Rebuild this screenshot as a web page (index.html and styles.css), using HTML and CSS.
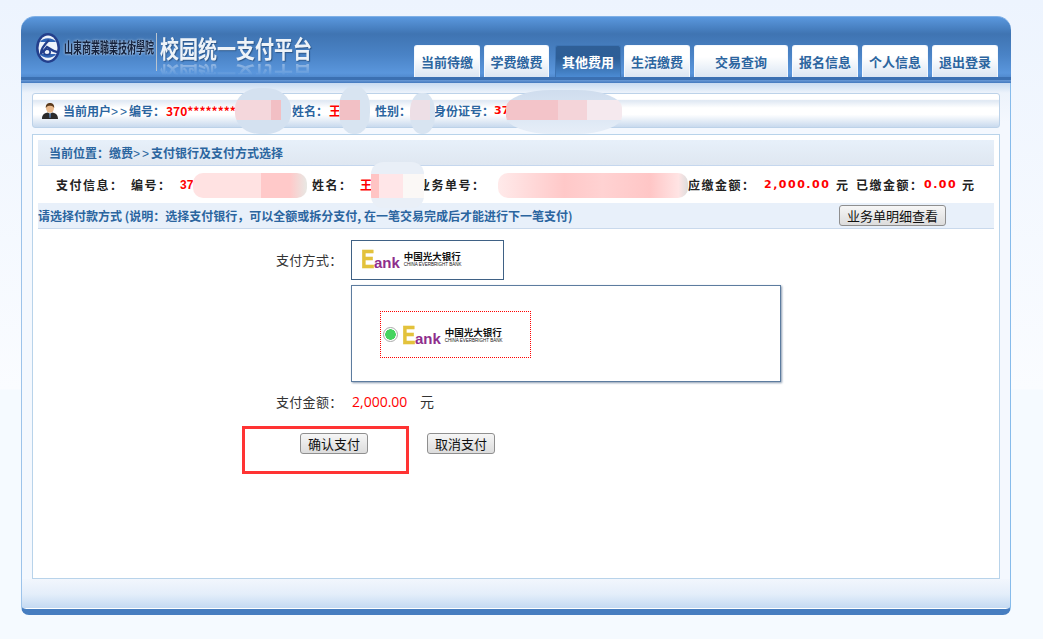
FILE: index.html
```html
<html>

<head>
  <title>校园统一支付平台</title>
  <meta charset="utf-8">
  <link rel="stylesheet" href="styles.css">
</head>

<body>
  <div class="shell">
    <div class="header">
      <div class="brand">
        <svg class="logo" width="24" height="30" viewBox="0 0 24 30">
          <ellipse cx="12" cy="15" rx="12" ry="15" fill="#233f8c" />
          <ellipse cx="12" cy="15" rx="9.500" ry="12.500" fill="#eef3fb" />
          <path d="M4 9 C7 4 17 4 20 9 Z" fill="#2f63b4" />
          <path d="M4 21 C7 26 17 26 20 21 Z" fill="#2f63b4" />
          <path d="M13 7 C9 11 5 16 5 20 C8 19 9 16 11 14 C15 16 17 19 21 19" fill="none" stroke="#233f8c" stroke-width="2.400" />
          <ellipse cx="11" cy="19" rx="3.200" ry="2.800" fill="none" stroke="#233f8c" stroke-width="1.600" />
        </svg>
        <span class="school">山東商業職業技術學院</span>
        <span class="divider"></span>
        <div class="title-wrap">
          <span class="title">校园统一支付平台</span>
          <span class="title-shadow" aria-hidden="true">校园统一支付平台</span>
        </div>
      </div>
      <div class="tabs">
        <a class="tab">当前待缴</a>
        <a class="tab tab-narrow">学费缴费</a>
        <a class="tab active">其他费用</a>
        <a class="tab">生活缴费</a>
        <a class="tab tab-wide">交易查询</a>
        <a class="tab">报名信息</a>
        <a class="tab">个人信息</a>
        <a class="tab">退出登录</a>
      </div>
    </div>
    <div class="strip"></div>

    <div class="main">
      <div class="user-bar">
        <svg class="user-icon" width="16" height="16" viewBox="0 0 16 16">
          <path d="M0 16 C0 11 3 10 6 9.500 L8 11 L10 9.500 C13 10 16 11 16 16 Z" fill="#2b2b2b" />
          <path d="M7 10.500 L9 10.500 L8.500 15 L7.500 15 Z" fill="#5a7fb0" />
          <ellipse cx="8" cy="5" rx="4" ry="4.800" fill="#e9b98c" />
          <path d="M3.800 5 C3.500 1 6 0 8 0 C10 0 12.500 1 12.200 5 C11 3 9 2.800 8 2.800 C7 2.800 5 3 3.800 5 Z" fill="#5a3a1c" />
        </svg>
        <span class="user-text user-label">当前用户<span class="arrows">&gt;&gt;</span>编号：</span>
        <span class="user-text red user-id">370********</span>
        <span class="user-text user-name">姓名：</span>
        <span class="user-text red user-fam">王</span>
        <span class="user-text user-sex">性别：</span>
        <span class="user-text user-card">身份证号：</span>
        <span class="user-text red user-rest">37</span>
      </div>

      <div class="content">
        <div class="crumb">当前位置：缴费<span class="arrows">&gt;&gt;</span>支付银行及支付方式选择</div>
        <div class="pay-info">
          <span class="info-a">支付信息：</span>
          <span class="info-b">编号：</span>
          <span class="red info-c">37</span>
          <span class="info-d">姓名：</span>
          <span class="red info-e">王</span>
          <span class="info-f">业务单号：</span>
          <span class="info-g">应缴金额：</span>
          <span class="red money info-h">2,000.00</span>
          <span class="info-i">元</span>
          <span class="info-j">已缴金额：</span>
          <span class="red money info-k">0.00</span>
          <span class="info-i">元</span>
        </div>
        <div class="method-bar">
          <span>请选择付款方式 (说明：选择支付银行，可以全额或拆分支付, 在一笔交易完成后才能进行下一笔支付)</span>
          <button class="button detail-btn">业务单明细查看</button>
        </div>

        <div class="form">
          <div class="form-label method-label">支付方式：</div>
          <div class="bank-tab">
            <div class="bank-logo">
              <span class="bank-e">E</span><span class="bank-ank">ank</span>
              <div class="bank-name">
                <span class="bank-cn">中国光大银行</span>
                <span class="bank-en">CHINA EVERBRIGHT BANK</span>
              </div>
            </div>
          </div>
          <div></div>
          <div class="bank-panel">
            <div class="bank-choice">
              <span class="radio"></span>
              <div class="bank-logo">
                <span class="bank-e">E</span><span class="bank-ank">ank</span>
                <div class="bank-name">
                  <span class="bank-cn">中国光大银行</span>
                  <span class="bank-en">CHINA EVERBRIGHT BANK</span>
                </div>
              </div>
            </div>
          </div>
          <div class="form-label amount-row">支付金额：</div>
          <div class="amount-row amount">
            <span class="red amount-num">2,000.00</span>
            <span>元</span>
          </div>
        </div>
        <div class="actions">
          <button class="button">确认支付</button>
          <button class="button">取消支付</button>
        </div>
      </div>
    </div>

    <div class="footer"></div>

    <!-- redacted areas and the red mark lie over the page -->
    <div class="blob blob-a"></div>
    <div class="blob blob-b"></div>
    <div class="blob blob-c"></div>
    <div class="blob blob-d"></div>
    <div class="blob blob-e"></div>
    <div class="blob blob-f"></div>
    <div class="blob blob-g"></div>
    <div class="mark"></div>
  </div>
</body>

</html>
```
FILE: styles.css
```css
body {
  margin: 0;
  height: 639px;
  overflow: hidden;
  font-family: "Noto Sans CJK SC", sans-serif;
  font-size: 12px;
  background: linear-gradient(#edf4fe 0, #fafcff 389px, #f5faff 390px);
}

.red {
  color: #f00;
}

.arrows {
  font-family: "Liberation Sans", sans-serif;
  font-weight: normal;
  letter-spacing: 2px;
}

.shell {
  position: relative;
  width: 990px;
  height: 599px;
  margin: 16px 0 0 21px;
  display: flex;
  flex-direction: column;
}

.header {
  height: 61px;
  flex: none;
  display: flex;
  justify-content: space-between;
  border-radius: 14px 14px 0 0;
  border-top: 1px solid #7fb0e6;
  box-sizing: border-box;
  background: linear-gradient(#5a98de 0, #3f74b2 17px, #4a83c6 38px, #5a96dc 56px, #4f88cc 61px);
}

.brand {
  display: flex;
  align-items: flex-start;
  padding: 16px 0 0 15px;
}

.logo {
  margin-right: 4px;
}

.school {
  width: 90px;
  margin-top: 8px;
  font-family: "Liberation Serif", "Noto Sans CJK SC", serif;
  font-size: 9px;
  font-weight: bold;
  line-height: 14px;
  white-space: nowrap;
  color: #14213c;
  text-shadow: 0 0 2px #dfe8f4;
  transform: scaleY(1.600);
}

.divider {
  width: 1px;
  height: 38px;
  margin: 0 3px 0 2px;
  background: #b9c4cf;
}

.title-wrap {
  position: relative;
}

.title {
  display: block;
  margin-top: 1px;
  font-size: 19px;
  font-weight: bold;
  line-height: 27px;
  white-space: nowrap;
  color: #eef3f8;
  text-shadow: 1px 1px 1px #2c5688;
  transform: scaleY(1.250);
}

.title-shadow {
  position: absolute;
  left: 0;
  top: 27px;
  font-size: 19px;
  font-weight: bold;
  line-height: 28px;
  white-space: nowrap;
  color: #e4edf8;
  transform: scaleY(-1);
  -webkit-mask-image: linear-gradient(to top, #0009 0, transparent 55%);
}

.tabs {
  display: flex;
  gap: 4px;
  align-items: flex-end;
  padding-right: 13px;
}

.tab {
  width: 66px;
  height: 32px;
  box-sizing: border-box;
  text-align: center;
  line-height: 31px;
  font-size: 13px;
  font-weight: bold;
  color: #2c659f;
  border: 1px solid #f4f8fd;
  border-bottom: 0;
  border-radius: 3px 3px 0 0;
  background: linear-gradient(#ffffff 0, #ffffff 35%, #dbe6f3 100%);
}

.tab-narrow {
  width: 65px;
}

.tab-wide {
  width: 94px;
}

.active {
  margin: 0 -1px 0 2px;
  color: #fff;
  border-color: #3d74b4;
  background: linear-gradient(#2f5f97 0, #2d5e97 40%, #4b8bd3 100%);
}

.strip {
  height: 6px;
  flex: none;
  background: linear-gradient(#3b70b2 0, #3b70b2 50%, #6a9ad6 50%, #4379bf 100%);
}

.main {
  flex: 1;
  box-sizing: border-box;
  padding: 10px 10px 0;
  display: flex;
  flex-direction: column;
  gap: 6px;
  border-left: 1px solid #9dc3ea;
  border-right: 1px solid #86bbeb;
  background: linear-gradient(#c8dbf1 0, #edf3fb 10px, #f4f8fe 40px);
}

.user-bar {
  height: 35px;
  flex: none;
  box-sizing: border-box;
  display: flex;
  align-items: center;
  padding-left: 9px;
  border: 1px solid #bcd2e9;
  border-radius: 3px;
  background: linear-gradient(#fff 0, #fff 16%, #dfe8f3 20%, #fff 42%, #fff 62%, #c9daee 100%);
}

.user-icon {
  margin-right: 5px;
}

.user-text {
  font-weight: bold;
  font-size: 12px;
  color: #2b659f;
  white-space: nowrap;
}

.user-text.red {
  color: #f00;
}

.user-label {
  width: 103px;
}

.user-id {
  width: 126px;
}

.user-name {
  width: 37px;
}

.user-fam {
  width: 46px;
}

.user-sex {
  width: 59px;
}

.user-card {
  width: 60px;
}

.user-rest {
  font-family: "DejaVu Sans", sans-serif;
  font-size: 11px;
}

.content {
  height: 445px;
  flex: none;
  box-sizing: border-box;
  padding: 5px;
  border: 1px solid #b8d3ea;
  background: #fff;
}

.crumb {
  height: 26px;
  box-sizing: border-box;
  padding-left: 11px;
  line-height: 25px;
  font-weight: bold;
  color: #2b659f;
  border-bottom: 1px solid #c5d7ee;
  background: linear-gradient(#e7f0fa, #dfe7f1);
}

.pay-info {
  height: 37px;
  display: flex;
  align-items: center;
  font-weight: bold;
  letter-spacing: 1.500px;
  color: #222;
  white-space: nowrap;
}

.money {
  font-family: "DejaVu Sans", sans-serif;
  font-size: 11px;
  letter-spacing: 1.500px;
}

.info-a {
  margin-left: 18px;
  width: 75px;
}

.info-b {
  width: 49px;
}

.info-c {
  width: 132px;
  font-family: "Liberation Sans", sans-serif;
  letter-spacing: 0;
}

.info-d {
  width: 48px;
}

.info-e {
  width: 58px;
}

.info-f {
  width: 270px;
}

.info-g {
  width: 76px;
}

.info-h {
  width: 72px;
}

.info-i {
  width: 20px;
}

.info-j {
  width: 68px;
}

.info-k {
  width: 38px;
}

.method-bar {
  height: 26px;
  box-sizing: border-box;
  display: flex;
  align-items: center;
  justify-content: space-between;
  padding-right: 48px;
  font-weight: bold;
  color: #2b659f;
  border-bottom: 1px solid #c9d9ec;
  background: #e8f0fa;
}

.button {
  height: 21px;
  padding: 0 7px;
  font-family: "Noto Sans CJK SC", sans-serif;
  font-size: 13px;
  line-height: 17px;
  color: #111;
  border: 1px solid #8f8f8f;
  border-radius: 3px;
  background: linear-gradient(#f6f6f6, #dcdcdc);
}

.form {
  display: grid;
  grid-template-columns: 75px 430px;
  row-gap: 5px;
  margin: 11px 0 0 238px;
  font-size: 13px;
  color: #333;
}

.form-label {
  white-space: nowrap;
  letter-spacing: 0.300px;
}

.method-label {
  line-height: 40px;
}

.bank-tab {
  width: 153px;
  height: 40px;
  box-sizing: border-box;
  padding: 7px 0 0 9px;
  border: 1px solid #3f6185;
}

.bank-panel {
  height: 97px;
  box-sizing: border-box;
  padding: 25px 0 0 28px;
  border: 1px solid #5d7c9f;
  box-shadow: 1px 1px 2px #8a9bb0;
}

.bank-choice {
  width: 151px;
  height: 47px;
  box-sizing: border-box;
  display: flex;
  align-items: center;
  padding-left: 2px;
  border: 1px dotted #f00;
}

.radio {
  width: 15px;
  height: 15px;
  flex: none;
  box-sizing: border-box;
  margin-right: 4px;
  border: 1px solid #aaa;
  border-radius: 50%;
  background: radial-gradient(#46d460 0, #46d460 5px, #fff 5.500px);
}

.bank-logo {
  display: flex;
  align-items: flex-end;
  height: 22px;
}

.bank-e {
  width: 13px;
  font-family: "Liberation Sans", sans-serif;
  font-size: 25px;
  line-height: 22px;
  font-weight: bold;
  color: #e3c23c;
  -webkit-text-stroke: 0.600px #e3c23c;
  transform: scaleX(0.800);
  transform-origin: left;
}

.bank-ank {
  font-family: "Liberation Sans", sans-serif;
  font-size: 15px;
  line-height: 15px;
  font-weight: bold;
  color: #8e2e8c;
}

.bank-name {
  display: flex;
  flex-direction: column;
  margin: 0 0 2px 4px;
  white-space: nowrap;
  color: #111;
}

.bank-cn {
  font-size: 9.500px;
  line-height: 12px;
  font-weight: bold;
}

.bank-en {
  font-family: "Liberation Sans", sans-serif;
  font-size: 4.500px;
  line-height: 6px;
}

.amount-row {
  margin-top: 5px;
  line-height: 20px;
}

.amount {
  display: flex;
  gap: 12px;
  padding-left: 1px;
  font-family: "Open Sans", "Noto Sans CJK SC", sans-serif;
  font-size: 14px;
}

.amount-num {
  width: 56px;
}

.actions {
  display: flex;
  gap: 59px;
  margin: 21px 0 0 262px;
}

.footer {
  height: 36px;
  flex: none;
  box-sizing: border-box;
  border-left: 1px solid #9dc3ea;
  border-right: 1px solid #86bbeb;
  border-bottom: 6px solid #467dc0;
  border-radius: 0 0 8px 8px;
  background: linear-gradient(#f2f6fd 0, #e4eefa 50%, #c4d9f2 29px, #fff 29px);
}

.blob {
  position: absolute;
}

.blob-a {
  left: 214px;
  top: 72px;
  width: 56px;
  height: 46px;
  border-radius: 45%;
  background: linear-gradient(#0000 12px, #f4d7dc 12px, #f4d7dc 32px, #0000 32px) 0 0 / 36px 100% no-repeat,
    linear-gradient(#0000 12px, #f2bfc4 12px, #f2bfc4 32px, #0000 32px) 26px 0 / 20px 100% no-repeat,
    #d4e1f0;
}

.blob-b {
  left: 318px;
  top: 70px;
  width: 31px;
  height: 48px;
  border-radius: 45%;
  background: linear-gradient(#0000 14px, #f2c0c5 14px, #f2c0c5 34px, #0000 34px) 1px 0 / 20px 100% no-repeat,
    #d8e4f1;
}

.blob-c {
  left: 389px;
  top: 77px;
  width: 25px;
  height: 41px;
  border-radius: 45%;
  background: linear-gradient(#0000 7px, #eddfe6 7px, #eddfe6 27px, #0000 27px) 0 0 / 20px 100% no-repeat,
    #d8e4f1;
}

.blob-d {
  left: 485px;
  top: 74px;
  width: 116px;
  height: 44px;
  border-radius: 40%;
  background: linear-gradient(90deg, #f3c4c9 0, #f3c4c9 45%, #f4d4d9 45%, #f4d4d9 70%, #f5e9ee 70%, #f5e9ee 100%) 0 10px / 100% 20px no-repeat,
    linear-gradient(#cfddee, #e6eef8);
}

.blob-e {
  left: 172px;
  top: 157px;
  width: 114px;
  height: 25px;
  border-radius: 10px;
  background: linear-gradient(90deg, #ffe2e2 0, #ffe2e2 60%, #ffc9c9 60%, #ffc9c9 85%, #e8e8e4 100%);
}

.blob-f {
  left: 350px;
  top: 146px;
  width: 53px;
  height: 46px;
  border-radius: 12px;
  background: linear-gradient(90deg, #ffc4c4 0, #ffc4c4 15%, #ffe6e8 15%, #ffe6e8 60%, #fbf8f6 60%, #fbf8f6 100%) 0 12px / 100% 24px no-repeat,
    #e9eff7;
}

.blob-g {
  left: 477px;
  top: 157px;
  width: 190px;
  height: 25px;
  border-radius: 10px;
  background: linear-gradient(90deg, #ffeaea 0, #ffc8c8 35%, #ffd2d2 55%, #ffc6c6 80%, #ffe4e4 95%, #ddd 100%);
}

.mark {
  position: absolute;
  left: 221px;
  top: 410px;
  width: 167px;
  height: 48px;
  box-sizing: border-box;
  border: 3px solid #f33;
}
```
